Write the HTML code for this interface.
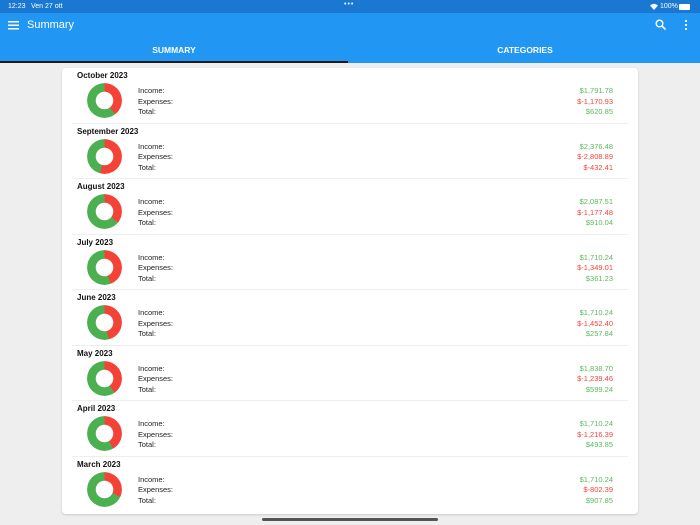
<!DOCTYPE html>
<html><head><meta charset="utf-8"><style>
*{margin:0;padding:0;box-sizing:border-box}
body{width:700px;height:525px;background:#eeeeee;font-family:"Liberation Sans",sans-serif;position:relative;overflow:hidden}
.sb{position:absolute;top:0;left:0;width:700px;height:13px;background:#1a78d2;color:#fff;font-size:7px}
.tb{position:absolute;top:13px;left:0;width:700px;height:50px;background:#2196f3;color:#fff}
.ind{position:absolute;top:61px;left:0;width:348px;height:2px;background:#1a1a1a}
.card{position:absolute;left:62px;top:68px;width:576px;height:446px;background:#fff;border-radius:4px;box-shadow:0 1px 2px rgba(0,0,0,.15)}
.row{position:absolute;left:0;width:576px;height:55.5px}
.h{position:absolute;left:15px;top:3px;font-size:8px;font-weight:bold;color:#111}
.d{position:absolute;left:25px;top:15px;width:35px;height:35px;border-radius:50%;-webkit-mask:radial-gradient(circle,transparent 8.5px,#000 9px);mask:radial-gradient(circle,transparent 8.5px,#000 9px)}
.l{position:absolute;left:76px;font-size:7.5px;color:#222}
.v{position:absolute;right:25px;font-size:7.5px;text-align:right}
.g{color:#5cb85f}.r{color:#f0463a}
.sep{position:absolute;left:10px;right:10px;bottom:0;height:1px;background:#eee}
</style></head><body>
<div class="sb"><span style="position:absolute;left:8px;top:3px">12:23</span><span style="position:absolute;left:31px;top:3px">Ven 27 ott</span><span style="position:absolute;left:344px;top:1px;letter-spacing:1px">•••</span><span style="position:absolute;left:660px;top:3px">100%</span><span style="position:absolute;left:679px;top:4px;width:11px;height:6px;background:#fff;border-radius:1px"></span><svg style="position:absolute;left:650px;top:3px" width="8" height="7" viewBox="0 0 8 7"><path d="M4 7L0 2.5Q4 -1 8 2.5Z" fill="#fff"/></svg></div>
<div class="tb">
<svg style="position:absolute;left:8px;top:7px" width="12" height="10"><rect y="1" width="11" height="1.5" fill="#fff"/><rect y="4.5" width="11" height="1.5" fill="#fff"/><rect y="8" width="11" height="1.5" fill="#fff"/></svg>
<span style="position:absolute;left:27px;top:6px;font-size:11px">Summary</span>
<svg style="position:absolute;left:655px;top:6px" width="12" height="12"><circle cx="4.5" cy="4.5" r="3.3" stroke="#fff" stroke-width="1.4" fill="none"/><path d="M7 7L10.5 10.5" stroke="#fff" stroke-width="1.6"/></svg>
<svg style="position:absolute;left:684px;top:6px" width="4" height="12"><circle cx="2" cy="2" r="1.1" fill="#fff"/><circle cx="2" cy="6" r="1.1" fill="#fff"/><circle cx="2" cy="10" r="1.1" fill="#fff"/></svg>
<span style="position:absolute;left:0;width:348px;text-align:center;top:32px;font-size:8.5px;font-weight:bold">SUMMARY</span>
<span style="position:absolute;left:350px;width:350px;text-align:center;top:32px;font-size:8.5px;font-weight:bold">CATEGORIES</span>
</div>
<div class="ind"></div>
<div class="card">
<div class="row" style="top:0"><div class="h">October 2023</div><div class="d" style="background:conic-gradient(#f44336 0 39.5%,#4caf50 0)"></div><div class="l" style="top:18px">Income:</div><div class="l" style="top:28.5px">Expenses:</div><div class="l" style="top:39px">Total:</div><div class="v g" style="top:18px">$1,791.78</div><div class="v r" style="top:28.5px">$-1,170.93</div><div class="v g" style="top:39px">$620.85</div><div class="sep"></div></div>
<div class="row" style="top:55.5px"><div class="h">September 2023</div><div class="d" style="background:conic-gradient(#f44336 0 54.2%,#4caf50 0)"></div><div class="l" style="top:18px">Income:</div><div class="l" style="top:28.5px">Expenses:</div><div class="l" style="top:39px">Total:</div><div class="v g" style="top:18px">$2,376.48</div><div class="v r" style="top:28.5px">$-2,808.89</div><div class="v r" style="top:39px">$-432.41</div><div class="sep"></div></div>
<div class="row" style="top:111px"><div class="h">August 2023</div><div class="d" style="background:conic-gradient(#f44336 0 36%,#4caf50 0)"></div><div class="l" style="top:18px">Income:</div><div class="l" style="top:28.5px">Expenses:</div><div class="l" style="top:39px">Total:</div><div class="v g" style="top:18px">$2,087.51</div><div class="v r" style="top:28.5px">$-1,177.48</div><div class="v g" style="top:39px">$910.04</div><div class="sep"></div></div>
<div class="row" style="top:166.5px"><div class="h">July 2023</div><div class="d" style="background:conic-gradient(#f44336 0 44.1%,#4caf50 0)"></div><div class="l" style="top:18px">Income:</div><div class="l" style="top:28.5px">Expenses:</div><div class="l" style="top:39px">Total:</div><div class="v g" style="top:18px">$1,710.24</div><div class="v r" style="top:28.5px">$-1,349.01</div><div class="v g" style="top:39px">$361.23</div><div class="sep"></div></div>
<div class="row" style="top:222px"><div class="h">June 2023</div><div class="d" style="background:conic-gradient(#f44336 0 45.9%,#4caf50 0)"></div><div class="l" style="top:18px">Income:</div><div class="l" style="top:28.5px">Expenses:</div><div class="l" style="top:39px">Total:</div><div class="v g" style="top:18px">$1,710.24</div><div class="v r" style="top:28.5px">$-1,452.40</div><div class="v g" style="top:39px">$257.84</div><div class="sep"></div></div>
<div class="row" style="top:277.5px"><div class="h">May 2023</div><div class="d" style="background:conic-gradient(#f44336 0 40.3%,#4caf50 0)"></div><div class="l" style="top:18px">Income:</div><div class="l" style="top:28.5px">Expenses:</div><div class="l" style="top:39px">Total:</div><div class="v g" style="top:18px">$1,838.70</div><div class="v r" style="top:28.5px">$-1,239.46</div><div class="v g" style="top:39px">$599.24</div><div class="sep"></div></div>
<div class="row" style="top:333px"><div class="h">April 2023</div><div class="d" style="background:conic-gradient(#f44336 0 41.6%,#4caf50 0)"></div><div class="l" style="top:18px">Income:</div><div class="l" style="top:28.5px">Expenses:</div><div class="l" style="top:39px">Total:</div><div class="v g" style="top:18px">$1,710.24</div><div class="v r" style="top:28.5px">$-1,216.39</div><div class="v g" style="top:39px">$493.85</div><div class="sep"></div></div>
<div class="row" style="top:388.5px"><div class="h">March 2023</div><div class="d" style="background:conic-gradient(#f44336 0 31.9%,#4caf50 0)"></div><div class="l" style="top:18px">Income:</div><div class="l" style="top:28.5px">Expenses:</div><div class="l" style="top:39px">Total:</div><div class="v g" style="top:18px">$1,710.24</div><div class="v r" style="top:28.5px">$-802.39</div><div class="v g" style="top:39px">$907.85</div></div>
</div>
<div style="position:absolute;left:262px;top:518px;width:176px;height:3px;border-radius:2px;background:#555"></div>
</body></html>
